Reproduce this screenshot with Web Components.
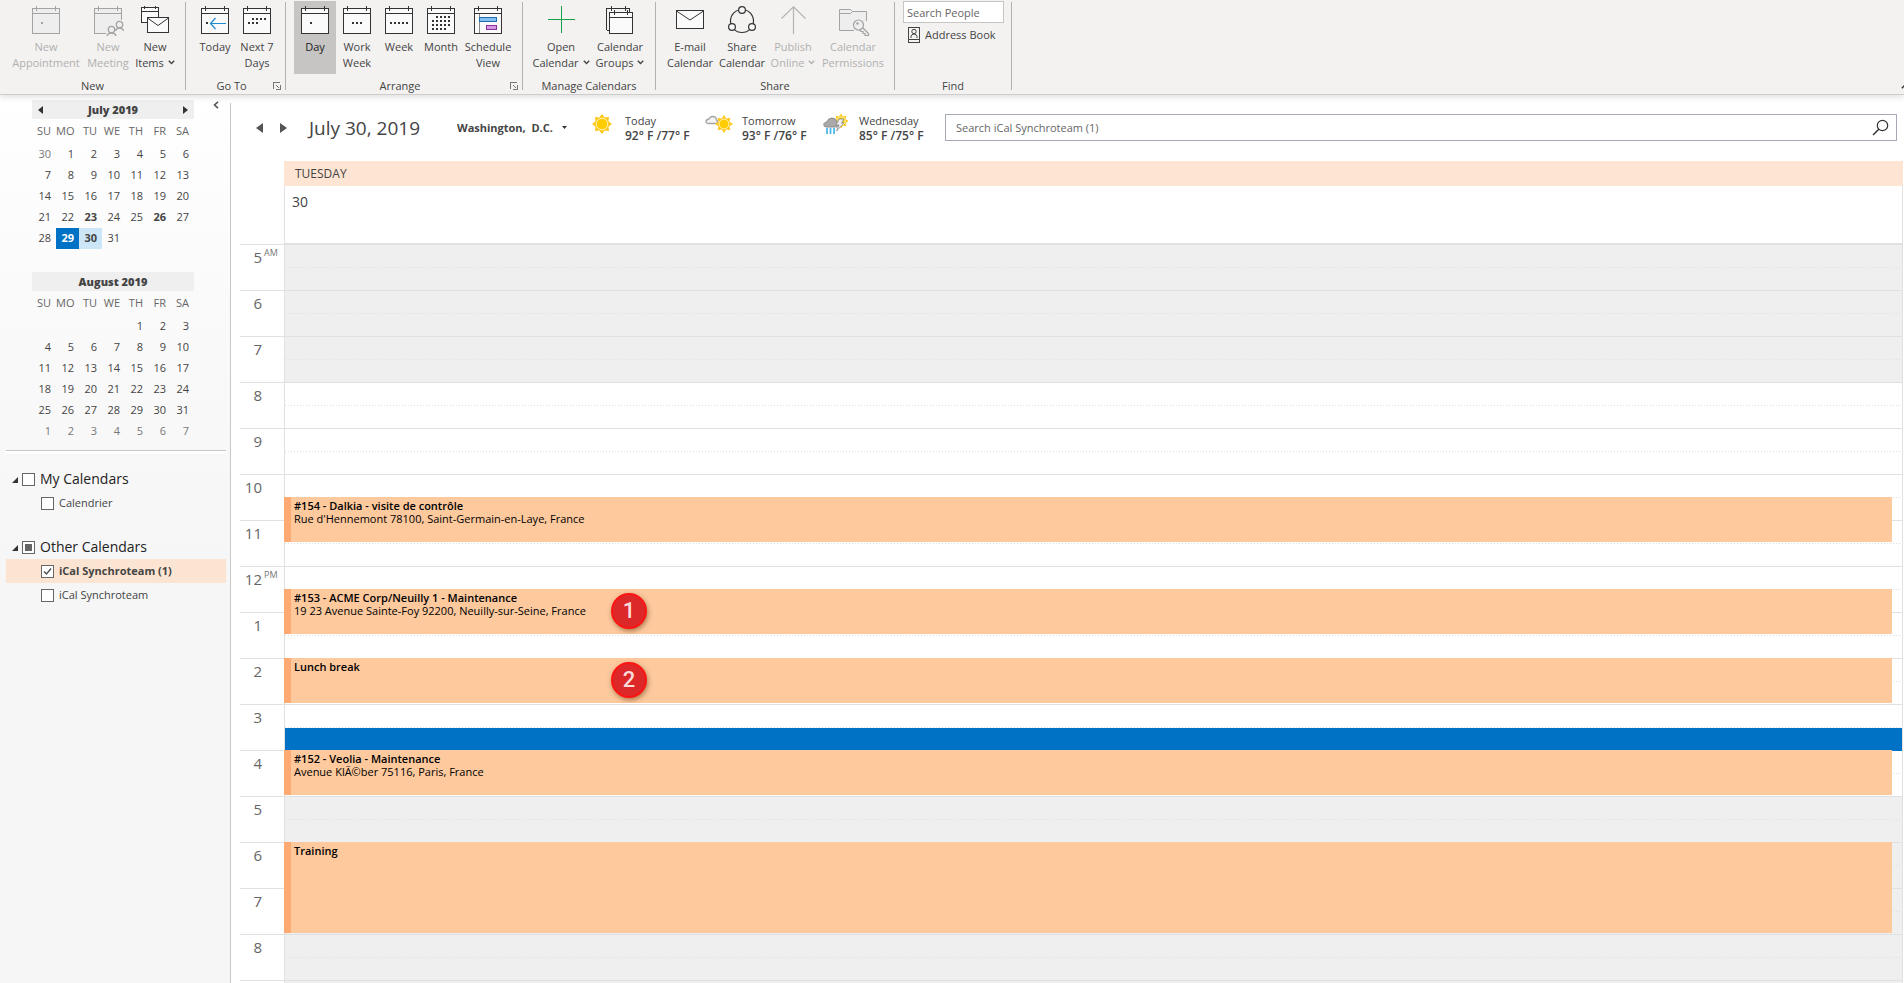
<!DOCTYPE html>
<html lang="en">
<head>
<meta charset="utf-8">
<title>Calendar - July 30, 2019</title>
<style>
  html, body { margin: 0; height: 100%; }
  body {
    font-family: "Open Sans", "Noto Sans", sans-serif;
    font-size: 12px;
    line-height: 16px;
    color: #444;
    background: #fff;
    overflow: hidden;
  }
</style>
</head>
<body>
<calendar-app></calendar-app>

<script>
const define = (name, html, setup) => {
  const tpl = document.createElement('template');
  tpl.innerHTML = html;
  customElements.define(name, class extends HTMLElement {
    connectedCallback() {
      if (this.shadowRoot) return;
      const root = this.attachShadow({ mode: 'open' });
      root.append(tpl.content.cloneNode(true));
      if (setup) setup(this, root);
    }
  });
};

/* ---------- icons ---------- */
const dots = (list, fill = '#333') => list.map(([x, y]) => `<rect x="${x}" y="${y}" width="2" height="2" fill="${fill}"/>`).join('');
const row = (y, xs) => xs.map(x => [x, y]);
const sheet = (stroke = '#333', fill = '#fafafa') =>
  `<rect x=".5" y="2.5" width="27" height="25" fill="${fill}" stroke="${stroke}"/><path d="M0 7.5H28M4.5 0V5M23.5 0V5" fill="none" stroke="${stroke}"/>`;
const GREY = '#a3a3a3';
const sunRays = (cx, cy, r, R) => {
  let p = '';
  for (let i = 0; i < 16; i++) {
    const a = i * Math.PI / 8, q = i % 2 ? r : R;
    p += (i ? 'L' : 'M') + (cx + q * Math.sin(a)).toFixed(2) + ' ' + (cy - q * Math.cos(a)).toFixed(2);
  }
  return `<path d="${p}Z" fill="#ffc81e"/><circle cx="${cx}" cy="${cy}" r="${r * .82}" fill="#fc0" stroke="#fff3b0"/>`;
};
const ICONS = {
  appointment: [28, 28, `<g shape-rendering="crispEdges">${sheet(GREY, '#eee')}${dots([[9, 16]], GREY)}</g>`],
  meeting: [28, 28, `<path d="M12 27.5H.5V2.5H27.5V13" fill="#eee"/><path d="M12 27.5H.5V2.5H27.5V14M0 7.5H28M4.5 0V5M23.5 0V5" fill="none" stroke="${GREY}" shape-rendering="crispEdges"/><g fill="#eee" stroke="${GREY}" stroke-width="1.3"><circle cx="25.5" cy="18.500" r="3.200"/><path d="M21.500 25Q22 22 25.500 22T29.500 25"/><circle cx="17.500" cy="23.500" r="3.200"/><path d="M13 30Q13.500 27 17.500 27T22 30"/></g>`],
  items: [28, 28, `<g fill="#fafafa" stroke="#333"><path d="M5.500 16.500H.5V1.500H17.500V10.500M.5 5.500H17.500M3.500 0V3M14.500 0V3" shape-rendering="crispEdges"/><rect x="6.500" y="11.500" width="21" height="15" shape-rendering="crispEdges"/><path d="M6.500 12L17 19.500L27.500 12" fill="none"/></g>`],
  today: [28, 28, `<g shape-rendering="crispEdges">${sheet()}${dots([[5, 16]])}</g><path d="M25 17.500H9.500M14.500 12L9.500 17.500L14.500 23" fill="none" stroke="#1e8bcd" stroke-width="1.200"/>`],
  next7: [28, 28, `<g shape-rendering="crispEdges">${sheet()}${dots([...row(12, [9, 13, 17, 21]), ...row(16, [5, 9, 13])])}</g>`],
  day: [28, 28, `<g shape-rendering="crispEdges">${sheet()}${dots([[9, 16]])}</g>`],
  workweek: [28, 28, `<g shape-rendering="crispEdges">${sheet()}${dots(row(16, [9, 13, 17]))}</g>`],
  week: [28, 28, `<g shape-rendering="crispEdges">${sheet()}${dots(row(16, [5, 9, 13, 17, 21]))}</g>`],
  month: [28, 28, `<g shape-rendering="crispEdges">${sheet()}${dots([...row(10, [9, 13, 17, 21]), ...row(14, [5, 9, 13, 17, 21]), ...row(18, [5, 9, 13, 17, 21]), ...row(22, [5, 9, 13, 17])])}</g>`],
  schedule: [28, 28, `<g shape-rendering="crispEdges">${sheet()}<path d="M5.500 8V27" stroke="#888"/><rect x="5.500" y="11.500" width="17" height="4" fill="#83beec" stroke="#1c6cb5"/><rect x="12.500" y="19.500" width="10" height="4" fill="#d59ae0" stroke="#8c2f9c"/></g>`],
  plus: [28, 28, `<path d="M14.500 0V27M1 13.500H28" stroke="#13a24a" shape-rendering="crispEdges"/>`],
  groups: [28, 28, `<g shape-rendering="crispEdges" fill="none" stroke="#333"><path d="M.5 24V2.500H23.500V6M3 24.500H.5M5.500 0V5M19.500 0V5"/><rect x="3.500" y="6.500" width="23" height="21" fill="#fafafa"/><path d="M3.500 11.500H26.500M8.500 4V9M21.500 4V9"/></g>`],
  mail: [28, 28, `<g fill="#fafafa" stroke="#333"><rect x=".5" y="4.500" width="27" height="18" shape-rendering="crispEdges"/><path d="M.5 5L14 14L27.500 5" fill="none"/></g>`],
  share: [28, 28, `<g fill="#f6f6f6" stroke="#333" stroke-width="1.200"><circle cx="14" cy="15" r="11.500" fill="none"/><circle cx="14" cy="4" r="3.400"/><circle cx="4" cy="21" r="3.400"/><circle cx="24" cy="21" r="3.400"/></g>`],
  publish: [28, 28, `<path d="M14.500 28V1M2.500 12.500L14.500 .8L26.500 12.500" fill="none" stroke="#b4b4b4" stroke-width="1.200"/>`],
  permissions: [28, 28, `<path d="M15 24.500H.5V3.500H11.500L13.500 5.500H27.500V15" fill="#eee" stroke="${GREY}"/><path d="M.5 7.500H11.500L13.500 5.500" fill="none" stroke="${GREY}"/><g fill="#eee" stroke="${GREY}" stroke-width="1.200"><path d="M22 20L29.500 27.500V29.500H26V27.500H24V25.500H22L19.500 23"/><circle cx="19.500" cy="19" r="5"/></g><circle cx="18.500" cy="17.500" r="1.200" fill="${GREY}"/>`],
  book: [13, 16, `<g fill="none" stroke="#444"><rect x=".5" y=".5" width="11" height="15"/><path d="M.5 12.500H11.500"/><circle cx="6" cy="4.500" r="2.200"/><path d="M3 11V9.500Q3.500 7 6 7T9 9.500V11"/></g>`],
  chevron: [7, 5, `<path d="M.8 .8L3.500 3.500L6.200 .8" fill="none" stroke="currentColor" stroke-width="1.400"/>`],
  launcher: [8, 8, `<g fill="none" stroke="#777" shape-rendering="crispEdges"><path d="M.5 7V.5H7M7.500 3V7.500H3"/></g><path d="M3 3L6 6" stroke="#777"/>`],
  sun: [20, 20, sunRays(10, 10, 7, 10)],
  cloudsun: [28, 20, `<path d="M4 9.500Q1 9.500 1 7.500T4 5Q5 2.500 8 2.500T11.500 6Q13 6 12 9.500Z" fill="#f4f4f4" stroke="#a6a6a6" stroke-width="1.300"/>${sunRays(19, 10, 6, 9)}`],
  storm: [26, 20, `${sunRays(18, 7, 5, 7.5)}<path d="M3 13Q0 12.500 1 9.500Q1.500 8 4 8Q5 4 9 4T14 8L17 7L14 13Z" fill="#a9a9a9" stroke="#8d8d8d"/><path d="M16 5H21L18.500 9H21L13.500 17L16 11H13Z" fill="#eee" stroke="#888" stroke-width=".8"/><path d="M4 14V20M7.500 14V20M11 14V20" stroke="#4db8ea" stroke-width="1.800"/>`],
  left: [7, 10, `<path d="M7 0V10L0 5Z" fill="currentColor"/>`],
  right: [7, 10, `<path d="M0 0V10L7 5Z" fill="currentColor"/>`],
  smallleft: [5, 8, `<path d="M5 0V8L0 4Z" fill="currentColor"/>`],
  smallright: [5, 8, `<path d="M0 0V8L5 4Z" fill="currentColor"/>`],
  down: [5, 3, `<path d="M0 0H5L2.500 3Z" fill="#333"/>`],
  collapse: [6, 8, `<path d="M5 .8L1.500 4L5 7.200" fill="none" stroke="#555" stroke-width="1.600"/>`],
  up: [10, 6, `<path d="M.8 5.200L5 1L9.200 5.200" fill="none" stroke="#333" stroke-width="1.500"/>`],
  magnify: [17, 17, `<circle cx="10.500" cy="6.500" r="5.200" fill="none" stroke="#333" stroke-width="1.200"/><path d="M6.800 10.200L1 16" stroke="#333" stroke-width="1.500"/>`],
  expanded: [7, 7, `<path d="M6 1V7H0Z" fill="#333"/>`]
};

define('ui-icon', `<style>:host{display:inline-flex;flex:none}svg{display:block;overflow:visible}</style>`, (el, root) => {
  const [w, h, art] = ICONS[el.getAttribute('name')];
  root.innerHTML += `<svg width="${w}" height="${h}" viewBox="0 0 ${w} ${h}" aria-hidden="true">${art}</svg>`;
});

/* ---------- ribbon ---------- */
define('ribbon-button', `
<style>
  :host { display: block; flex: none; }
  button { font: inherit; font-size: var(--ui); line-height: 16px; color: inherit; width: 100%; height: 73px; border: 0; background: none;
    padding: 5px 0 0; display: flex; flex-direction: column; align-items: center; gap: 5px; }
  :host([active]) button { background: #c6c5c3; color: #222; }
  button:disabled { color: #b1b0af; }
  .art { height: 28px; width: 28px; }
  .label { white-space: nowrap; text-align: center; }
  ui-icon[name=chevron] { margin-left: 4px; vertical-align: 2px; }
</style>
<button type="button"><span class="art"></span><span class="label"><slot></slot></span></button>`, (el, root) => {
  el.style.width = el.getAttribute('width') + 'px';
  root.querySelector('.art').innerHTML = `<ui-icon name="${el.getAttribute('icon')}"></ui-icon>`;
  if (el.hasAttribute('menu')) root.querySelector('.label').insertAdjacentHTML('beforeend', '<ui-icon name="chevron"></ui-icon>');
  root.querySelector('button').disabled = el.hasAttribute('disabled');
});

define('ribbon-group', `
<style>
  :host { display: flex; flex-direction: column; flex: none; box-sizing: border-box; border-right: 1px solid #b3b0ad; margin: 2px 0 4px; height: 88px; }
  .items { display: flex; flex: none; padding: 0 8px; height: 77px; margin-top: -1px; align-items: flex-start; }
  footer { display: flex; flex: none; align-items: center; font-size: var(--ui); line-height: 16px; padding: 0 4px; }
  footer span { flex: 1; text-align: center; }
  button { border: 0; background: none; padding: 0; display: flex; }
</style>
<div class="items"><slot></slot></div><footer><span></span></footer>`, (el, root) => {
  el.style.width = el.getAttribute('width') + 'px';
  root.querySelector('span').textContent = el.getAttribute('label');
  if (el.hasAttribute('launcher'))
    root.querySelector('footer').insertAdjacentHTML('beforeend', '<button type="button" aria-label="More options"><ui-icon name="launcher"></ui-icon></button>');
});

define('app-ribbon', `
<style>
  :host { display: flex; background: #f3f2f1; border-bottom: 1px solid #cfcdcb; box-shadow: 0 2px 6px rgba(0,0,0,.13); position: relative; z-index: 1; height: 94px; }
  .find { display: flex; flex-direction: column; gap: 4px; }
  input { font: inherit; font-size: var(--ui); box-sizing: border-box; width: 101px; height: 22px; border: 1px solid #c8c6c4; padding: 0 3px; background: #fff; }
  input::placeholder { color: #666; opacity: 1; }
  .book { font: inherit; font-size: var(--ui); color: inherit; border: 0; background: none; padding: 0 0 0 5px; display: flex; align-items: center; gap: 4px; height: 16px; white-space: nowrap; }
  .fold { margin: auto -7px 5px auto; border: 0; padding: 0; background: none; display: flex; }
</style>
<ribbon-group label="New" width="186">
  <ribbon-button icon="appointment" width="76" disabled>New<br>Appointment</ribbon-button>
  <ribbon-button icon="meeting" width="48" disabled>New<br>Meeting</ribbon-button>
  <ribbon-button icon="items" width="46" menu>New<br>Items</ribbon-button>
</ribbon-group>
<ribbon-group label="Go To" width="100" launcher>
  <ribbon-button icon="today" width="42">Today</ribbon-button>
  <ribbon-button icon="next7" width="42">Next 7<br>Days</ribbon-button>
</ribbon-group>
<ribbon-group label="Arrange" width="237" launcher>
  <ribbon-button icon="day" width="42" active>Day</ribbon-button>
  <ribbon-button icon="workweek" width="42">Work<br>Week</ribbon-button>
  <ribbon-button icon="week" width="42">Week</ribbon-button>
  <ribbon-button icon="month" width="42">Month</ribbon-button>
  <ribbon-button icon="schedule" width="52">Schedule<br>View</ribbon-button>
</ribbon-group>
<ribbon-group label="Manage Calendars" width="133">
  <ribbon-button icon="plus" width="60" menu>Open<br>Calendar</ribbon-button>
  <ribbon-button icon="groups" width="58" menu>Calendar<br>Groups</ribbon-button>
</ribbon-group>
<ribbon-group label="Share" width="239">
  <ribbon-button icon="mail" width="52">E-mail<br>Calendar</ribbon-button>
  <ribbon-button icon="share" width="52">Share<br>Calendar</ribbon-button>
  <ribbon-button icon="publish" width="50" menu disabled>Publish<br>Online</ribbon-button>
  <ribbon-button icon="permissions" width="70" disabled>Calendar<br>Permissions</ribbon-button>
</ribbon-group>
<ribbon-group label="Find" width="117">
  <div class="find">
    <input type="text" placeholder="Search People" aria-label="Search People">
    <button class="book" type="button"><ui-icon name="book"></ui-icon>Address Book</button>
  </div>
</ribbon-group>
<button class="fold" type="button" aria-label="Collapse the ribbon"><ui-icon name="up"></ui-icon></button>`);

/* ---------- sidebar ---------- */
define('mini-calendar', `
<style>
  :host { display: block; width: 162px; }
  header { display: flex; align-items: center; justify-content: space-between; background: #efefef; height: 19px; padding: 0 6px; font-size: var(--ui); font-weight: 700; }
  header b { flex: 1; text-align: center; }
  header button { border: 0; background: none; padding: 0; display: flex; color: #333; }
  table { border-collapse: collapse; table-layout: fixed; width: 161px; margin-left: 1px; font-size: var(--ui); }
  th, td { padding: 0 5px 1px 0; text-align: right; height: 20px; line-height: 18px; }
  th { height: 24px; font-weight: 400; color: #666; }
  .out { color: #777; }
  .busy { font-weight: 700; }
  .today { font-weight: 700; background: #0072c6; color: #fff; }
  .picked { font-weight: 700; background: #cde6f7; }
</style>
<header><b></b></header>
<table><thead><tr></tr></thead><tbody></tbody></table>`, (el, root) => {
  const at = n => el.getAttribute(n);
  root.querySelector('b').textContent = at('month');
  if (el.hasAttribute('nav')) {
    const h = root.querySelector('header');
    h.insertAdjacentHTML('afterbegin', '<button type="button" aria-label="Previous month"><ui-icon name="smallleft"></ui-icon></button>');
    h.insertAdjacentHTML('beforeend', '<button type="button" aria-label="Next month"><ui-icon name="smallright"></ui-icon></button>');
  }
  root.querySelector('tr').innerHTML = ['SU', 'MO', 'TU', 'WE', 'TH', 'FR', 'SA'].map(d => `<th scope="col">${d}</th>`).join('');
  const marks = JSON.parse(at('marks') || '{}');
  const lead = (at('lead') || '').split(' ').filter(Boolean).map(t => [t === '-' ? '' : t, 'out']);
  const days = Array.from({ length: 31 }, (_, i) => [i + 1, marks[i + 1] || '']);
  const tail = Array.from({ length: +at('tail') || 0 }, (_, i) => [i + 1, 'out']);
  const all = [...lead, ...days, ...tail];
  let html = '';
  for (let i = 0; i < all.length; i += 7)
    html += '<tr>' + all.slice(i, i + 7).map(([t, c]) => `<td class="${c}">${t}</td>`).join('') + '</tr>';
  root.querySelector('tbody').innerHTML = html;
});

define('check-row', `
<style>
  :host { display: block; }
  label { display: flex; align-items: center; height: 24px; gap: 5px; padding-left: 35px; font-size: var(--ui); white-space: nowrap; }
  input { appearance: none; box-sizing: border-box; width: 13px; height: 13px; margin: 0; border: 1px solid #666; background: #fff; flex: none; }
  input:checked { background: #fff url("data:image/svg+xml,%3Csvg xmlns='http://www.w3.org/2000/svg' width='11' height='11'%3E%3Cpath d='M2 5.500L4.500 8L9 2.500' fill='none' stroke='%23555' stroke-width='1.500'/%3E%3C/svg%3E"); }
  input:indeterminate { background: #666 content-box; padding: 2px; box-shadow: inset 0 0 0 2px #fff; }
  ui-icon { display: none; }
  :host([head]) label { font-size: 14px; color: #222; padding-left: 6px; }
  :host([head]) ui-icon { display: flex; margin-right: -2px; }
  :host([selected]) label { background: #fce4d2; font-weight: 700; }
</style>
<label><ui-icon name="expanded"></ui-icon><input type="checkbox"><span><slot></slot></span></label>`, (el, root) => {
  const box = root.querySelector('input');
  box.checked = el.hasAttribute('selected');
  box.indeterminate = el.hasAttribute('mixed');
});

define('calendar-sidebar', `
<style>
  :host { display: block; background: linear-gradient(#fff, #fafafa 200px, #f6f6f6 480px); }
  .inner { display: flow-root; border-right: 1px solid #c8c8c8; margin-top: 8px; height: calc(100% - 8px); box-sizing: border-box; }
  .months { display: flex; margin: -3px 11px 0 32px; justify-content: space-between; align-items: flex-start; }
  .stack { display: flex; flex-direction: column; gap: 23px; }
  .shift { border: 0; background: none; padding: 1px 0 0; display: flex; }
  hr { border: 0; height: 1px; background: #c8c8c8; box-shadow: 0 2px 0 1px #fff; margin: 8px 4px 16px 6px; }
  section { margin: 0 4px 20px 6px; }
</style>
<div class="inner">
  <div class="months">
    <div class="stack">
      <mini-calendar month="July 2019" nav lead="30" marks='{"23":"busy","26":"busy","29":"today","30":"picked"}'></mini-calendar>
      <mini-calendar month="August 2019" lead="- - - -" tail="7"></mini-calendar>
    </div>
    <button class="shift" type="button" aria-label="Minimize the folder pane"><ui-icon name="collapse"></ui-icon></button>
  </div>
  <hr>
  <section>
    <check-row head>My Calendars</check-row>
    <check-row>Calendrier</check-row>
  </section>
  <section>
    <check-row head mixed>Other Calendars</check-row>
    <check-row selected>iCal Synchroteam (1)</check-row>
    <check-row>iCal Synchroteam</check-row>
  </section>
</div>`);

/* ---------- main pane ---------- */
define('weather-day', `
<style>
  :host { display: flex; gap: 9px; width: 117px; font-size: var(--ui); line-height: 15px; flex: none; }
  .pic { width: 28px; display: flex; justify-content: center; align-items: flex-start; padding-top: 1px; }
  b { display: block; font-size: 12px; font-weight: 600; white-space: nowrap; }
</style>
<span class="pic"></span><span><slot></slot><b></b></span>`, (el, root) => {
  root.querySelector('.pic').innerHTML = `<ui-icon name="${el.getAttribute('icon')}"></ui-icon>`;
  root.querySelector('b').textContent = el.getAttribute('range');
});

define('day-toolbar', `
<style>
  :host { display: flex; align-items: center; height: 65px; padding: 0 7px 1px 25px; }
  .step { border: 0; background: none; padding: 0; display: flex; color: #555; margin-right: 17px; }
  h1 { font-size: 19px; font-weight: 400; line-height: 28px; margin: 0; width: 148px; white-space: nowrap; margin-left: 5px; }
  .place { display: flex; align-items: center; width: 131px; gap: 9px; }
  select { appearance: none; font: inherit; font-size: var(--ui); font-weight: 700; color: inherit; border: 0; background: none; padding: 0; margin: 0; }
  .days { display: flex; width: 357px; }
  .search { flex: 1; display: flex; align-items: center; height: 27px; box-sizing: border-box; border: 1px solid #a6a9b6; padding: 0 7px 0 10px; }
  input { flex: 1; min-width: 0; border: 0; padding: 0; background: none; font: inherit; font-size: var(--ui); outline: 0; }
  input::placeholder { color: #666; opacity: 1; }
  .search button { border: 0; background: none; padding: 0; display: flex; }
</style>
<button class="step" type="button" aria-label="Back"><ui-icon name="left"></ui-icon></button>
<button class="step" type="button" aria-label="Forward"><ui-icon name="right"></ui-icon></button>
<h1>July 30, 2019</h1>
<div class="place"><select aria-label="Weather location"><option>Washington,&nbsp; D.C.</option></select><ui-icon name="down"></ui-icon></div>
<div class="days">
  <weather-day icon="sun" range="92° F /77° F">Today</weather-day>
  <weather-day icon="cloudsun" range="93° F /76° F">Tomorrow</weather-day>
  <weather-day icon="storm" range="85° F /75° F">Wednesday</weather-day>
</div>
<div class="search"><input type="text" placeholder="Search iCal Synchroteam (1)" aria-label="Search iCal Synchroteam (1)"><button type="button" aria-label="Search"><ui-icon name="magnify"></ui-icon></button></div>`);

define('calendar-event', `
<style>
  :host { display: block; position: relative; background: #fdc99d; border-left: 7px solid #ffaa72; padding: 2px 3px; margin: -1px 10px 2px -1px; color: #000; font-size: 11px; line-height: 13px; overflow: hidden; }
  b, span { display: block; white-space: nowrap; }
  b { font-weight: 600; }
</style>
<b></b><span><slot></slot></span><slot name="badge"></slot>`, (el, root) => {
  root.querySelector('b').textContent = el.getAttribute('heading');
});

define('number-badge', `
<style>
  :host { position: absolute; left: 320px; top: 4px; width: 36px; height: 36px; box-sizing: border-box; border: 2px solid #ff1414; border-radius: 50%;
    background: #dc2828; color: #fbdada; font: 500 22px/32px Roboto, sans-serif; text-align: center; box-shadow: 1px 2px 5px rgba(90,40,0,.5); }
</style><slot></slot>`);

define('day-grid', `
<style>
  :host { display: grid; grid-template-columns: 44px 1fr; padding: 0 1px 0 9px; }
  .head { grid-column: 2; background: #fde4d3; height: 25px; line-height: 25px; padding-left: 11px; font-size: 12px; }
  .allday { grid-column: 2; height: 59px; box-sizing: border-box; border: solid #e1e1e1; border-width: 0 1px 2px; padding: 6px 7px; font-size: 14px; line-height: 20px; }
  .edge { border-bottom: 1px solid #e1e1e1; height: 59px; box-sizing: border-box; }
  .hours div { height: 46px; box-sizing: border-box; border-bottom: 1px solid #e1e1e1; display: grid; grid-template-columns: 22px 1fr; gap: 2px; color: #666; font-size: 15px; line-height: 24px; text-align: right; }
  .hours small { font-size: 9px; line-height: 16px; text-align: left; color: #777; }
  .slots { display: grid; grid-template-rows: repeat(34, 23px); border: solid #e1e1e1; border-width: 0 1px; }
  .slots > * { grid-column: 1; min-width: 0; }
  .slot { border-bottom: 1px solid #e1e1e1; }
  .half { border-bottom: 0; background: repeating-linear-gradient(90deg, #dedede 0 1px, transparent 1px 3px) bottom / 100% 1px no-repeat; }
  .off { background-color: #efefef; }
  .now { background: #0072c6; }
</style>
<div class="head">TUESDAY</div>
<div class="edge"></div><div class="allday">30</div>
<div class="hours"></div>
<div class="slots"></div>`, (el, root) => {
  const hours = ['5 AM', '6', '7', '8', '9', '10', '11', '12 PM', '1', '2', '3', '4', '5', '6', '7', '8', ''];
  root.querySelector('.hours').innerHTML = hours.map(h => {
    const [n, s] = h.split(' ');
    return `<div><span>${n}</span>${s ? `<small>${s}</small>` : ''}</div>`;
  }).join('');
  let html = '';
  for (let i = 0; i < 34; i++) {
    const off = i < 6 || i >= 24;
    html += `<div class="slot ${i % 2 ? '' : 'half'} ${off ? 'off' : ''}" style="grid-row:${i + 1}"></div>`;
  }
  html += '<div class="now" style="grid-row:22"></div>';
  const events = [
    [12, 2, '#154 - Dalkia - visite de contrôle', "Rue d'Hennemont 78100, Saint-Germain-en-Laye, France"],
    [16, 2, '#153 - ACME Corp/Neuilly 1 - Maintenance', '19 23 Avenue Sainte-Foy 92200, Neuilly-sur-Seine, France', 1],
    [19, 2, 'Lunch break', '', 2],
    [23, 2, '#152 - Veolia - Maintenance', 'Avenue KlÃ©ber 75116, Paris, France'],
    [27, 4, 'Training', '']
  ];
  html += events.map(([at, span, title, place, badge]) =>
    `<calendar-event style="grid-row:${at}/span ${span}" heading="${title}">${place}${badge ? `<number-badge slot="badge">${badge}</number-badge>` : ''}</calendar-event>`).join('');
  root.querySelector('.slots').innerHTML = html;
});

define('calendar-app', `
<style>
  :host { --ui: 11px; display: grid; grid-template: auto minmax(0, 1fr) / 231px minmax(0, 1fr); height: 100vh; }
  app-ribbon { grid-column: 1 / -1; }
  main { overflow: hidden; min-width: 0; }
</style>
<app-ribbon></app-ribbon>
<calendar-sidebar></calendar-sidebar>
<main><day-toolbar></day-toolbar><day-grid></day-grid></main>`);
</script>
</body>
</html>
